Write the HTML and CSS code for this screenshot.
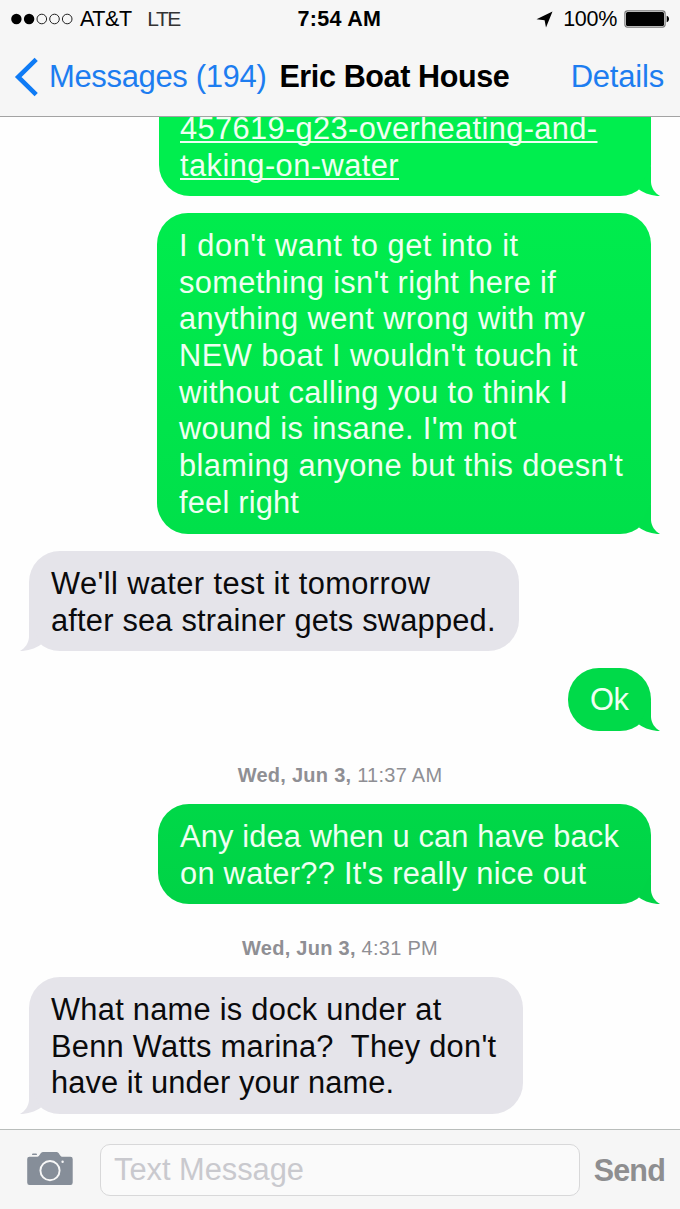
FILE: index.html
```html
<!DOCTYPE html>
<html lang="en">
<head>
<meta charset="utf-8">
<title>Messages</title>
<link rel="stylesheet" href="styles.css">
</head>
<body>
<div class="phone">
  <header class="top">
    <div class="status">
      <div class="carrier">
        <svg class="signal" width="62" height="12" viewBox="0 0 62 12"><g fill="#000"><circle cx="5.4" cy="6" r="5.2"/><circle cx="18.1" cy="6" r="5.2"/></g><g fill="none" stroke="#222" stroke-width="1"><circle cx="30.8" cy="6" r="4.8"/><circle cx="43.5" cy="6" r="4.8"/><circle cx="56.2" cy="6" r="4.8"/></g></svg>
        <span class="att">AT&amp;T</span><span class="lte">LTE</span>
      </div>
      <span class="clock">7:54 AM</span>
      <div class="power">
        <svg width="17" height="17" viewBox="0 0 17 17"><path d="M16.500 .5 10 16.500 8.600 9.200.5 8.300Z"/></svg>
        <span class="pct">100%</span>
        <svg width="46" height="18" viewBox="0 0 46 18"><rect x=".9" y=".9" width="40.2" height="16.2" rx="2.5" fill="none" stroke="#777" stroke-width="1.2"/><rect x="2" y="2" width="38" height="14" rx="1.5"/><path d="M42.700 5.800c1.500.5 2.300 1.700 2.300 3.200s-.8 2.700-2.300 3.200Z"/></svg>
      </div>
    </div>
    <nav class="nav">
      <svg class="chevron" width="24" height="40" viewBox="0 0 24 40"><path d="M22.2 2.4 4.2 20l18 17.6" fill="none" stroke="#0f7bf5" stroke-width="4.6"/></svg>
      <a class="back">Messages (194)</a>
      <h1 class="title">Eric Boat House</h1>
      <a class="details">Details</a>
    </nav>
  </header>

  <main class="thread">
    <div class="bubble sent link-msg">
      <span class="line l1">457619-g23-overheating-and-</span><span class="line l2">taking-on-water</span>
      <svg class="tail" width="21" height="32" viewBox="0 0 21 32"><path d="M12 1V18C12.300 24 15.800 29 21 32 13.500 32 6 29.800 0 25.500Z"/></svg>
    </div>
    <div class="bubble sent long-msg">
      <span class="line m1">I don't want to get into it</span><span class="line m2">something isn't right here if</span><span class="line m3">anything went wrong with my</span><span class="line m4">NEW boat I wouldn't touch it</span><span class="line m5">without calling you to think I</span><span class="line m6">wound is insane. I'm not</span><span class="line m7">blaming anyone but this doesn't</span><span class="line m8">feel right</span>
      <svg class="tail" width="21" height="32" viewBox="0 0 21 32"><path d="M12 1V18C12.300 24 15.800 29 21 32 13.500 32 6 29.800 0 25.500Z"/></svg>
    </div>
    <div class="bubble received test-msg">
      <span class="line n1">We'll water test it tomorrow</span><span class="line n2">after sea strainer gets swapped.</span>
      <svg class="tail" width="21" height="32" viewBox="0 0 21 32"><path d="M12 1V18C12.300 24 15.800 29 21 32 13.500 32 6 29.800 0 25.500Z"/></svg>
    </div>
    <div class="bubble sent ok-msg">
      <span class="line ok">Ok</span>
      <svg class="tail" width="21" height="32" viewBox="0 0 21 32"><path d="M12 1V18C12.300 24 15.800 29 21 32 13.500 32 6 29.800 0 25.500Z"/></svg>
    </div>
    <p class="stamp s1"><b>Wed, Jun 3,</b> 11:37 AM</p>
    <div class="bubble sent idea-msg">
      <span class="line o1">Any idea when u can have back</span><span class="line o2">on water?? It's really nice out</span>
      <svg class="tail" width="21" height="32" viewBox="0 0 21 32"><path d="M12 1V18C12.300 24 15.800 29 21 32 13.500 32 6 29.800 0 25.500Z"/></svg>
    </div>
    <p class="stamp s2"><b>Wed, Jun 3,</b> 4:31 PM</p>
    <div class="bubble received dock-msg">
      <span class="line p1">What name is dock under at</span><span class="line p2">Benn Watts marina?&nbsp; They don't</span><span class="line p3">have it under your name.</span>
      <svg class="tail" width="21" height="32" viewBox="0 0 21 32"><path d="M12 1V18C12.300 24 15.800 29 21 32 13.500 32 6 29.800 0 25.500Z"/></svg>
    </div>
  </main>

  <footer class="composer">
    <svg class="camera" width="46" height="35" viewBox="0 0 46 35"><path fill="#868e99" d="M2.500 5.800H10.500C12.500 5.800 13.200 1 16 1H29.500C32.300 1 33 5.800 35 5.800H43.500Q45.700 5.800 45.700 8V31.500Q45.700 34 43.500 34H2.500Q.2 34 .2 31.500V8Q.2 5.800 2.500 5.800ZM6 2.600H9Q10 2.600 10 4H5Q5 2.600 6 2.600Z"/><circle cx="23" cy="19.600" r="9.600" fill="none" stroke="#f7f7f7" stroke-width="1.900"/><circle cx="35.600" cy="10.700" r="1.200" fill="#f7f7f7"/></svg>
    <div class="field"><span class="hint">Text Message</span></div>
    <span class="send">Send</span>
  </footer>
</div>
</body>
</html>
```
FILE: styles.css
```css
* { box-sizing: border-box; }
body { margin: 0; background: #fefefe; font-family: "Liberation Sans", Arial, sans-serif; }
.phone { width: 680px; height: 1209px; display: flex; flex-direction: column; overflow: hidden; }
svg { display: block; flex: none; }

.top { flex: none; height: 117px; background: #f6f6f6; border-bottom: 1px solid #a3a3a3; z-index: 1; }
.status { height: 38px; display: grid; grid-template-columns: 286.500px auto 1fr; align-items: center; padding: 0 10px 0 11px; font-size: 21.500px; line-height: 38px; white-space: nowrap; }
.carrier, .power { display: flex; align-items: center; }
.power { justify-content: flex-end; }
.signal { margin-right: 7px; }
.att { letter-spacing: -.4px; }
.lte { margin-left: 15.500px; color: #333; font-size: 21px; letter-spacing: -1.800px; letter-spacing: -1.500px; }
.clock { font-weight: bold; letter-spacing: .3px; }
.pct { margin: 0 7px 0 10px; letter-spacing: -.3px; }
.nav { height: 78px; display: flex; align-items: center; padding: 0 16px 0 14px; font-size: 31px; line-height: 78px; white-space: nowrap; }
.back { color: #1d7df0; margin-left: 11px; letter-spacing: -.350px; }
.title { font-size: 30.500px; margin: -2px 0 0 13px; letter-spacing: -.370px; }
.details { color: #1d7df0; margin-left: auto; letter-spacing: -.200px; }

.thread { flex: 1; min-height: 0; display: flex; flex-direction: column; align-items: flex-start; overflow: hidden; }
.bubble { position: relative; flex: none; border-radius: 31px; padding: 14.800px 22px 0; font-size: 30.800px; line-height: 36.700px; white-space: nowrap; }
.line { display: block; }
.sent { align-self: flex-end; margin-right: 29px; color: #effff2; }
.received { margin-left: 29px; background: #e5e4ea; color: #0a0a0c; }
.tail { position: absolute; right: -9px; bottom: 0; fill: #00df4a; }
.received .tail { right: auto; left: -9px; transform: scaleX(-1); fill: #e5e4ea; }

.link-msg { width: 492px; height: 113px; margin-top: -34px; background: #00ee4e; padding-top: 28px; padding-left: 21px; text-decoration: underline; text-decoration-thickness: 2px; text-underline-offset: 2px; text-decoration-skip-ink: none; }
.link-msg .tail { fill: #00ee4e; }
.long-msg { width: 494px; height: 321px; margin-top: 17px; background: linear-gradient(#00ec4d, #00e04a); }
.long-msg .tail { fill: #00e04a; }
.test-msg { width: 490px; height: 100px; margin-top: 17px; }
.ok-msg { width: 83px; height: 63px; margin-top: 17px; background: #00da49; padding-top: 14px; }
.ok-msg .tail { fill: #00da49; }
.stamp { align-self: center; margin: 0; font-size: 20px; line-height: 24px; letter-spacing: .270px; color: #8f8f94; white-space: nowrap; }
.s1 { margin-top: 32px; }
.idea-msg { width: 493px; height: 100px; margin-top: 17px; background: linear-gradient(#00d848, #00d346); }
.idea-msg .tail { fill: #00d346; }
.s2 { margin-top: 32px; }
.dock-msg { width: 494px; height: 137px; margin-top: 17px; }

/* per-line tracking */
.l1 { letter-spacing: .370px; }
.l2 { letter-spacing: .450px; }
.m1 { letter-spacing: .570px; }
.m2 { letter-spacing: .350px; }
.m3 { letter-spacing: .400px; }
.m4 { letter-spacing: .460px; }
.m5 { letter-spacing: .420px; }
.m6 { letter-spacing: .340px; }
.m7 { letter-spacing: .390px; }
.m8 { letter-spacing: .200px; }
.n1 { letter-spacing: .400px; }
.n2 { letter-spacing: .200px; }
.ok { letter-spacing: -.500px; }
.o1 { letter-spacing: .140px; }
.o2 { letter-spacing: .270px; }
.p1, .p2 { letter-spacing: .270px; }
.p3 { letter-spacing: .100px; }

.composer { flex: none; height: 80px; display: flex; align-items: center; background: #f6f6f6; border-top: 1px solid #b9bdbb; padding: 0 15px 0 27px; }
.camera { margin-top: -3px; }
.field { width: 480px; height: 52px; margin-left: 27px; margin-top: 1px; border: 1.500px solid #d8d8d9; border-radius: 10px; background: #fafafa; padding-left: 13px; font-size: 30.800px; line-height: 50px; color: #c9c9ce; }
.send { margin-left: auto; margin-top: 1px; font-size: 30.500px; font-weight: bold; letter-spacing: -.800px; color: #8e8e90; }
```
